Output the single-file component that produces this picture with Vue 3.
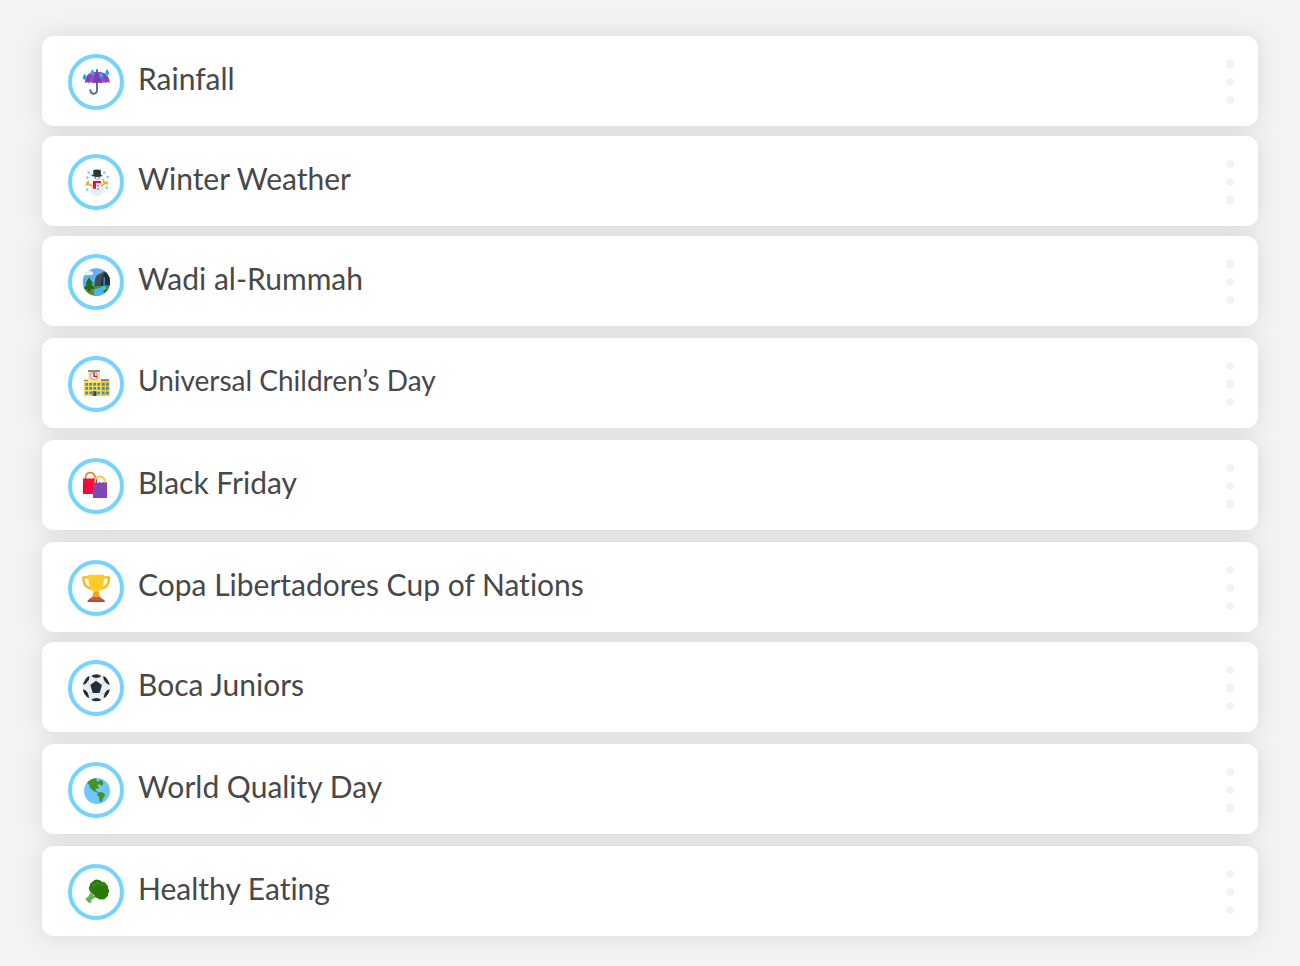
<script setup>
const topics = [
  { icon: 'umbrella', title: 'Rainfall' },
  { icon: 'snowman', title: 'Winter Weather', tight: true },
  { icon: 'valley', title: 'Wadi al-Rummah', tight: true },
  { icon: 'school', title: 'Universal Children’s Day', small: true },
  { icon: 'bags', title: 'Black Friday' },
  { icon: 'trophy', title: 'Copa Libertadores Cup of Nations' },
  { icon: 'football', title: 'Boca Juniors', tight: true },
  { icon: 'globe', title: 'World Quality Day' },
  { icon: 'broccoli', title: 'Healthy Eating' },
]

const schoolWindows = [58, 70, 82, 94, 108, 120]
const schoolFloors = [87, 99, 113]
const snowflakes = [[68, 62], [64, 77], [64, 113], [115, 62], [125, 75], [122, 107], [77, 69]]
</script>

<template>
  <main class="topics">
    <article v-for="topic in topics" :key="topic.title" class="card" :class="{ tight: topic.tight }">
      <div class="badge">
        <svg class="icon" viewBox="45 45 90 90" aria-hidden="true">
          <g v-if="topic.icon === 'umbrella'">
            <path d="M93 54v60q0 11-10 11-9 0-10-10" fill="none" stroke="#5f7480" stroke-width="6" stroke-linecap="round" />
            <path d="M57 92q0-33 36-33 37 0 38 33-7-4-12 0-6-4-12 2-7-5-14 0-6-5-12 0-6-6-12-1-6-4-12-1z" fill="#a14bc4" />
            <path d="M93 57q10 13 13 37-7-5-13 0-6-5-12 0 3-24 12-37z" fill="#7440ac" />
            <path d="M69 91q4-19 20-31-15 2-25 13l-7 19q6-3 12-1z" fill="#8342b0" />
            <path d="M119 92q-4-20-22-32 17 1 26 13l8 19q-7-4-12 0z" fill="#8742b8" />
            <path d="M56 65q-6 7-6 12 0 6 6 6t6-6-6-12zM79 52q-6 7-6 12 0 6 6 6t6-6-6-12zM105 59q-6 8-6 12 0 6 7 6t6-6-7-12zM123 51q-5 8-5 12 0 6 6 6t6-5-7-13z" fill="#29a9f5" />
          </g>

          <g v-else-if="topic.icon === 'snowman'">
            <circle v-for="([x, y], i) in snowflakes" :key="i" :cx="x" :cy="y" r="4" fill="#7bcff8" />
            <circle cx="93" cy="111" r="21" fill="#e3edf2" />
            <circle cx="93" cy="81" r="13" fill="#eef4f7" />
            <path d="M79 102L60 92m6-6l1 10-8 3M106 102l18-14m-14-7l5 11 11 4" fill="none" stroke="#f9a91b" stroke-width="5" />
            <path d="M82 54q11-3 22 0l1 15q5 0 5 3-17 6-32 0 0-3 4-4z" fill="#303438" />
            <circle cx="88" cy="78" r="2" fill="#333" />
            <circle cx="99" cy="78" r="2" fill="#333" />
            <path d="M93 80l5 3-7 2z" fill="#f58220" />
            <path d="M81 87h24v6H90v17h-9z" fill="#f30938" />
            <circle cx="96" cy="102" r="2" fill="#42474a" />
            <circle cx="96" cy="111" r="2" fill="#42474a" />
          </g>

          <g v-else-if="topic.icon === 'valley'">
            <clipPath id="valley-clip"><circle cx="91" cy="90" r="41" /></clipPath>
            <g clip-path="url(#valley-clip)">
              <path d="M49 48h84v84H49z" fill="#5eb3ee" />
              <path d="M49 70q0-11 10-11 10-9 20 1 5 3 0 9z" fill="#e4f4ff" />
              <path d="M83 105l6-31q6-8 18-11 5-9 14-3l14 10v36z" fill="#484d53" />
              <path d="M103 103l7-33 9-10 18 14v30z" fill="#252b32" />
              <path d="M112 75h5v27h-5z" fill="#168fd5" />
              <path d="M48 108q22-13 45-5l42-4v36H48z" fill="#43972d" />
              <path d="M106 102q4 5-10 7-17 4-14 9 9 4-6 14h43q-1-11-10-16 18-4 8-14z" fill="#4bb3f5" />
              <path d="M69 76L58 95h5L52 111h35L76 95h6z" fill="#286d17" />
              <path d="M65 111h9v7h-9z" fill="#8f3116" />
              <path d="M113 116q12-7 22-10v29h-17z" fill="#34752e" />
            </g>
          </g>

          <g v-else-if="topic.icon === 'school'">
            <path d="M54 80h53v46H54z" fill="#ffd84c" />
            <path d="M105 80h26v46h-26z" fill="#fcc61b" />
            <path d="M54 77h15v4H54zM105 75h24v6h-24zM66 48h36v6H66z" fill="#8e8988" />
            <path d="M66 54h36v30H66z" fill="#ffe3a0" />
            <circle cx="84" cy="66" r="12" fill="#a3a3a3" />
            <circle cx="84" cy="66" r="9" fill="#f2f2f2" />
            <path d="M84 56v11h9" fill="none" stroke="#d90c22" stroke-width="4" />
            <template v-for="y in schoolFloors" :key="y">
              <rect v-for="x in schoolWindows" :key="x" :x="x" :y="y" width="8" height="8" fill="#2593d4" />
            </template>
            <path d="M79 111h12v15H79z" fill="#51768a" />
            <path d="M85 113h6v13h-6z" fill="#174b6e" />
          </g>

          <g v-else-if="topic.icon === 'bags'">
            <path d="M58 70q0-20 14-20t17 20" fill="none" stroke="#f57c10" stroke-width="5" />
            <path d="M51 66l5 3 5-3 5 3 5-3 5 3 5-3 6 3 6-3v48H51z" fill="#f50b3e" />
            <path d="M51 82h3v32h-3z" fill="#c9083a" />
            <path d="M87 82q0-21 14-21 16 0 16 21" fill="none" stroke="#ffc52e" stroke-width="5" />
            <path d="M81 78l5 3 5-3 5 3 5-3 5 3 5-3 6 3 6-3v48H81z" fill="#7e48b3" />
          </g>

          <g v-else-if="topic.icon === 'trophy'">
            <path d="M70 58H52q-1 28 22 34M111 58h18q1 28-22 34" fill="none" stroke="#ffb514" stroke-width="7" stroke-linejoin="round" />
            <path d="M67 50h47q1 35-9 45-5 4-8 7v9H84v-9q-4-3-8-7-10-10-9-45z" fill="#ffca24" />
            <path d="M83 101h15l4 17H78z" fill="#f4a51c" />
            <path d="M75 119q3-2 7-2h17q6 0 8 4 8 2 8 10H65q1-8 10-12z" fill="#c75a3c" />
            <path d="M65 127h51v5H65z" fill="#af4738" />
          </g>

          <g v-else-if="topic.icon === 'football'">
            <circle cx="91" cy="90" r="40" fill="#e8eff3" />
            <path d="M90 68l18 13-7 24H80L73 81z" fill="#252e36" />
            <path d="M91 49q9 0 15 5-6 6-15 6t-15-6q6-5 15-5zM57 66q4-9 13-13 1 9-4 17-6 8-14 11-1-7 5-15zM125 66q-4-9-13-13-1 9 4 17 6 8 14 11 1-7-5-15zM51 94q8 1 14 10 5 8 4 16-8-2-13-11-5-7-5-15zM131 94q-9 1-14 10-5 8-4 16 8-2 13-11 5-7 5-15zM76 125q6-5 15-5t15 5q-6 5-15 5t-15-5z" fill="#252e36" />
            <path d="M90 59v10M65 71l8 10M116 71l-9 10M66 110l14-7M115 110l-14-7" fill="none" stroke="#c3d1d9" stroke-width="3" />
          </g>

          <g v-else-if="topic.icon === 'globe'">
            <circle cx="93" cy="93" r="39" fill="#72c6ff" />
            <path d="M63 68q10-11 25-13l8 4 12 2 4 8-3 8-11-4-5 4 6 3-1 5-8 2-2 5 9 3-4 3-12-6-9-9-2-8zM95 98q9-4 17 0l6 7-6 8q-2 11-11 14l-2-16-6-5z" fill="#459323" />
            <path d="M92 57l6 1 3 4-4 3-6-3z" fill="#72c6ff" />
          </g>

          <g v-else>
            <path d="M72 93l18 12-8 5q-9 3-5 9l-5 4q-9-2-14-14 10-2 14-16z" fill="#63b34b" />
            <path d="M70 84q-4-6 1-12 0-9 8-12 6-10 16-7 8 0 12 6 11-1 14 8 7 5 5 12 6 8 1 15 1 9-6 12-4 8-12 6-9 2-15-4-7 0-9-9-12-4-15-15z" fill="#287b09" />
            <path d="M73 81l7-3 3-9 8 1 5-7 8 6 7-5 5 8M78 66l7 3 7-8 7 3M109 60l5 8 9 2M75 90l7-3" fill="none" stroke="#43912a" stroke-width="4" stroke-dasharray="4 3" />
          </g>
        </svg>
      </div>
      <h2 class="title" :class="{ small: topic.small }">{{ topic.title }}</h2>
      <button class="menu" type="button" :aria-label="`Options for ${topic.title}`">
        <span class="dot"></span>
        <span class="dot"></span>
        <span class="dot"></span>
      </button>
    </article>
  </main>
</template>

<style>
body {
  margin: 0;
  background: #f3f3f3;
}
</style>

<style scoped>
.topics {
  position: relative;
  z-index: 0;
  padding: 36px 42px 30px;
  font-family: Lato, "Open Sans", sans-serif;
}

.card {
  position: relative;
  display: flex;
  align-items: center;
  box-sizing: border-box;
  min-height: 90px;
  padding: 18px 24px 16px 26px;
  border-radius: 12px;
  background: #fff;
}

/* keeps every shadow below the neighbouring cards */
.card::before {
  content: "";
  position: absolute;
  inset: 0;
  z-index: -1;
  border-radius: 12px;
  box-shadow: 0 0 24px rgba(0, 0, 0, 0.1);
}

.card + .card {
  margin-top: 12px;
}

.card + .card.tight {
  margin-top: 10px;
}

.badge {
  display: flex;
  align-items: center;
  justify-content: center;
  flex: none;
  box-sizing: border-box;
  width: 56px;
  height: 56px;
  border: 4px solid #75d3ff;
  border-radius: 50%;
}

.icon {
  width: 30px;
  height: 30px;
}

.title {
  flex: 1;
  margin: 0;
  padding: 0 14px 8px;
  color: #484848;
  font-size: 30px;
  font-weight: 400;
  font-variant-ligatures: none;
  line-height: 36px;
}

.title.small {
  font-size: 28px;
}

.menu {
  display: flex;
  flex-direction: column;
  gap: 10px;
  padding: 0;
  border: 0;
  background: none;
  cursor: pointer;
}

.dot {
  width: 8px;
  height: 8px;
  border-radius: 50%;
  background: #f3f3f3;
}
</style>
